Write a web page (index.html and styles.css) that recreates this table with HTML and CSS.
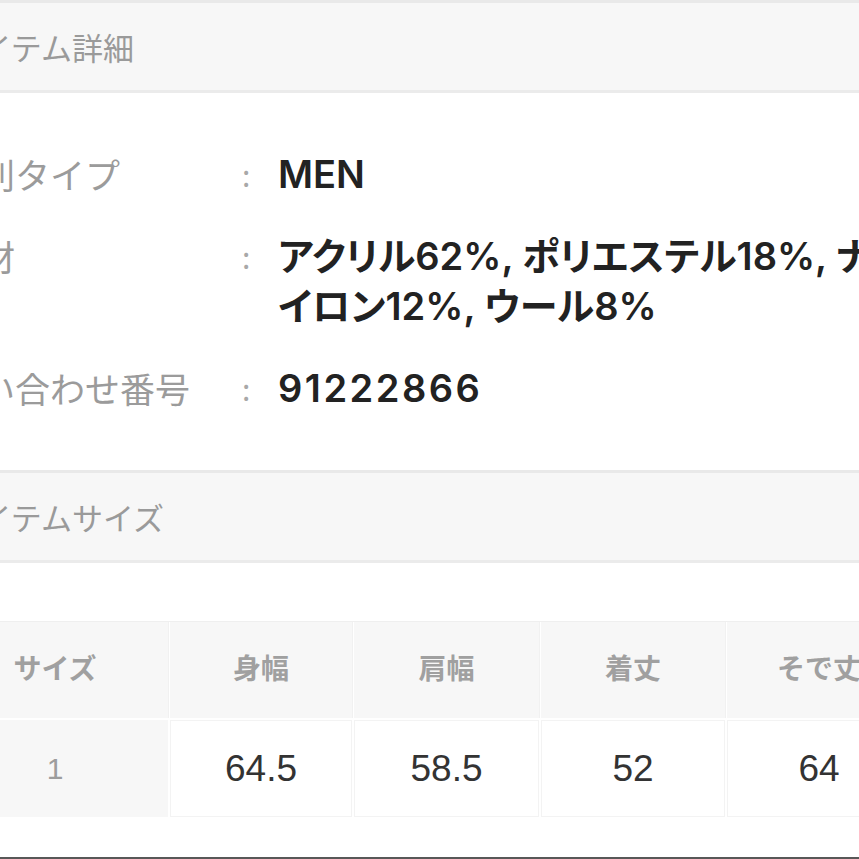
FILE: index.html
```html
<!DOCTYPE html>
<html lang="ja">
<head>
<meta charset="utf-8">
<title>アイテム詳細</title>
<link rel="stylesheet" href="styles.css">
</head>
<body>
<div class="page">
  <section class="block">
    <h2 class="block-title">アイテム詳細</h2>
    <dl class="spec">
      <div class="spec-row">
        <dt class="spec-label">性別タイプ</dt>
        <dd class="spec-colon">:</dd>
        <dd class="spec-value">MEN</dd>
      </div>
      <div class="spec-row">
        <dt class="spec-label">素材</dt>
        <dd class="spec-colon">:</dd>
        <dd class="spec-value">アクリル62%, ポリエステル18%, ナイロン12%, ウール8%</dd>
      </div>
      <div class="spec-row">
        <dt class="spec-label">問い合わせ番号</dt>
        <dd class="spec-colon">:</dd>
        <dd class="spec-value spec-code">91222866</dd>
      </div>
    </dl>
  </section>
  <section class="block">
    <h2 class="block-title">アイテムサイズ</h2>
    <div class="size-table">
      <div class="cell head">サイズ</div>
      <div class="cell head">身幅</div>
      <div class="cell head">肩幅</div>
      <div class="cell head">着丈</div>
      <div class="cell head">そで丈</div>
      <div class="cell size">1</div>
      <div class="cell num">64.5</div>
      <div class="cell num">58.5</div>
      <div class="cell num">52</div>
      <div class="cell num">64</div>
    </div>
  </section>
  <div class="bottom-rule"></div>
</div>
</body>
</html>
```

FILE: styles.css
```css
html, body {
  margin: 0;
  padding: 0;
  background: #ffffff;
  overflow: hidden;
}

body {
  font-family: "Noto Sans CJK JP", sans-serif;
  width: 859px;
  height: 859px;
}

.page {
  margin-left: -55px;
  width: 1100px;
}

.block-title {
  margin: 0;
  height: 87px;
  line-height: 87px;
  padding-left: 6px;
  background: #f7f7f7;
  border-top: 3px solid #e9e9e9;
  border-bottom: 3px solid #ebebeb;
  font-size: 31px;
  font-weight: 400;
  color: #9a9a9a;
}

.spec {
  margin: 0;
  padding: 56px 0 57px;
  display: flex;
  flex-direction: column;
  gap: 32px;
}

.spec-row {
  display: grid;
  grid-template-columns: 297px 36px 625px;
  align-items: start;
}

.spec-label {
  font-size: 35px;
  line-height: 50px;
  color: #9b9b9b;
  white-space: nowrap;
}

.spec-colon {
  margin: 0;
  font-size: 30px;
  line-height: 50px;
  color: #a8a8a8;
}

.spec-value {
  margin: 0;
  font-family: "Inter", "Noto Sans CJK JP", sans-serif;
  font-feature-settings: "palt";
  font-size: 38px;
  line-height: 50px;
  font-weight: 600;
  color: #222222;
}

.spec-code {
  letter-spacing: 2.5px;
}

.size-table {
  margin: 58px 0 0 -3px;
  display: grid;
  grid-template-columns: 226px 182px 185px 184px 184px;
  grid-template-rows: 96px 97px;
  column-gap: 2px;
  row-gap: 2px;
  border-top: 1px solid #efefef;
}

.cell {
  display: flex;
  align-items: center;
  justify-content: center;
}

.head {
  background: #f7f7f7;
  font-size: 28px;
  font-weight: 700;
  color: #a0a0a0;
  box-shadow: 1px 0 0 #f1f1f1;
  padding-bottom: 6px;
}

.size {
  background: #f7f7f7;
  font-family: "Liberation Sans", sans-serif;
  font-size: 30px;
  color: #9d9d9d;
}

.num {
  background: #ffffff;
  border: 1px solid #f3f3f3;
  font-family: "Liberation Sans", sans-serif;
  font-size: 37px;
  color: #333333;
}

.bottom-rule {
  margin-top: 40px;
  border-top: 3px solid #585858;
}
```
